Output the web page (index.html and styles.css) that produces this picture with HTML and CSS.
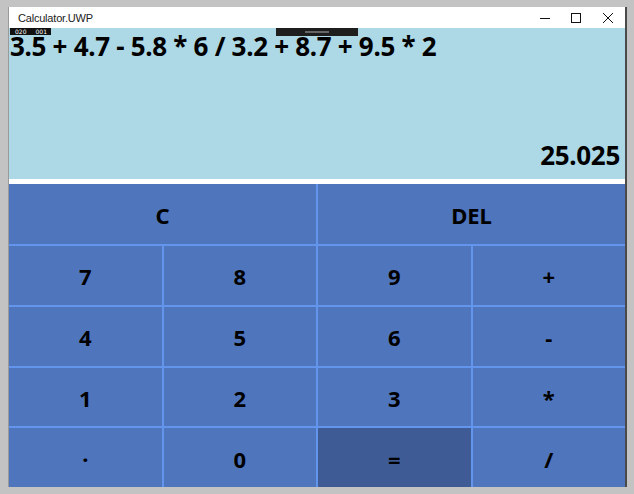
FILE: index.html
```html
<!DOCTYPE html>
<html>
<head>
<meta charset="utf-8">
<link rel="stylesheet" href="styles.css">
</head>
<body>
<div class="window">
  <div class="titlebar">
    <span class="title">Calculator.UWP</span>
    <div class="controls">
      <span class="ctl"><svg width="10" height="10" viewBox="0 0 10 10"><path d="M0 5.5H10" stroke="#111" stroke-width="1"/></svg></span>
      <span class="ctl"><svg width="10" height="10" viewBox="0 0 10 10"><rect x="0.5" y="0.5" width="9" height="9" fill="none" stroke="#111" stroke-width="1"/></svg></span>
      <span class="ctl"><svg width="10" height="10" viewBox="0 0 10 10"><path d="M0 0L10 10M10 0L0 10" stroke="#111" stroke-width="1"/></svg></span>
    </div>
  </div>
  <div class="display">
    <div class="counter"><span>020</span><span>001</span></div>
    <div class="grabber"><span></span></div>
    <div class="expr">3.5 + 4.7 - 5.8 * 6 / 3.2 + 8.7 + 9.5 * 2</div>
    <div class="result">25.025</div>
  </div>
  <div class="sep"></div>
  <div class="keys">
    <button class="key wide">C</button>
    <button class="key wide">DEL</button>
    <button class="key">7</button>
    <button class="key">8</button>
    <button class="key">9</button>
    <button class="key">+</button>
    <button class="key">4</button>
    <button class="key">5</button>
    <button class="key">6</button>
    <button class="key">-</button>
    <button class="key">1</button>
    <button class="key">2</button>
    <button class="key">3</button>
    <button class="key">*</button>
    <button class="key">·</button>
    <button class="key">0</button>
    <button class="key eq">=</button>
    <button class="key">/</button>
  </div>
</div>
</body>
</html>
```
FILE: styles.css
```css
html, body {
  margin: 0;
  padding: 0;
  background: #c3c3c3;
  width: 634px;
  height: 494px;
  overflow: hidden;
}
body {
  padding: 7px 0 0 8px;
  box-sizing: border-box;
  font-family: "Noto Sans", "Open Sans", sans-serif;
}
.window {
  width: 616px;
  height: 480px;
  background: #fff;
  border-left: 1px solid #9a9a9a;
  border-right: 2px solid #4a4a4a;
  display: flex;
  flex-direction: column;
}
.titlebar {
  height: 21px;
  display: flex;
  align-items: center;
  justify-content: space-between;
  flex: none;
}
.title {
  font-size: 11px;
  color: #222;
  padding-left: 9px;
  font-family: "Liberation Sans", sans-serif;
  letter-spacing: -0.2px;
}
.controls {
  display: flex;
  height: 100%;
}
.ctl {
  width: 31px;
  display: flex;
  align-items: center;
  justify-content: center;
}
.ctl:last-child {
  width: 34px;
}
.display {
  position: relative;
  height: 151px;
  background: #add8e6;
  display: flex;
  flex-direction: column;
  justify-content: space-between;
  flex: none;
}
.counter {
  position: absolute;
  left: 1px;
  top: 0;
  width: 41px;
  height: 7px;
  background: #111;
  color: #fff;
  font-size: 6px;
  line-height: 7px;
  font-family: "DejaVu Sans", sans-serif;
  padding: 0 4px 0 5px;
  box-sizing: border-box;
  display: flex;
  justify-content: space-between;
}
.grabber {
  position: absolute;
  left: 267px;
  top: 0;
  width: 82px;
  height: 8px;
  background: #1e1e1e;
  display: flex;
  justify-content: center;
  align-items: center;
}
.grabber span {
  width: 24px;
  height: 2px;
  background: #666;
}
.expr {
  font-size: 26px;
  font-weight: 700;
  color: #000;
  line-height: 18px;
  padding: 9px 0 0 1px;
  white-space: nowrap;
  letter-spacing: -0.3px;
}
.result {
  font-size: 26px;
  font-weight: 700;
  color: #000;
  line-height: 18px;
  text-align: right;
  padding: 0 5px 15px 0;
  letter-spacing: -0.3px;
}
.sep {
  height: 5px;
  background: #fff;
  flex: none;
}
.keys {
  flex: 1;
  display: grid;
  grid-template-columns: repeat(4, 1fr);
  grid-template-rows: 60px repeat(4, 1fr);
  gap: 2px;
  background: #6495ed;
}
.key {
  border: none;
  margin: 0;
  padding: 2px 0 0 0;
  background: #4f75bd;
  color: #000;
  font-family: "Noto Sans", "Open Sans", sans-serif;
  font-weight: 700;
  font-size: 22px;
  display: flex;
  align-items: center;
  justify-content: center;
}
.key.wide {
  grid-column: span 2;
}
.key.eq {
  background: #3e5b96;
}
```
